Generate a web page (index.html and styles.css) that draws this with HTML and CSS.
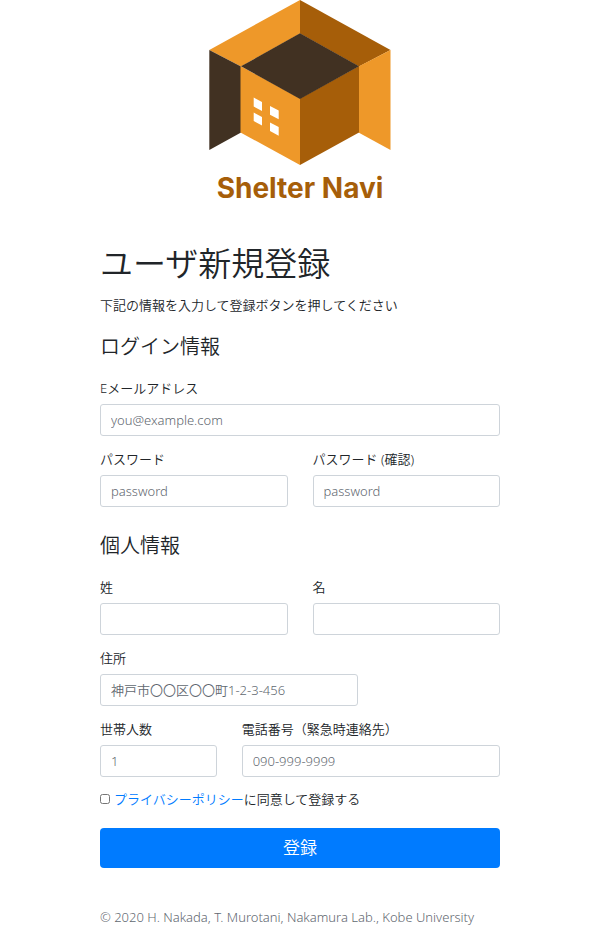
FILE: index.html
```html
<!DOCTYPE html>
<html lang="ja">
<head>
<meta charset="utf-8">
<meta name="viewport" content="width=device-width, initial-scale=1">
<title>Shelter Navi</title>
<link rel="stylesheet" href="styles.css">
</head>
<body>
<header class="brand">
  <svg class="logo" viewBox="0 0 200 210" role="img" aria-label="Shelter Navi">
    <path fill="#ee9829" d="M100 0 9.300 50 41 66.500 100 33.500z"/>
    <path fill="#a65e09" d="M100 0 190.500 50 159 66.500 100 33.500z"/>
    <path fill="#413122" d="M9.300 50 41 66.500V132.500L9.300 150z"/>
    <path fill="#ee9829" d="M190.500 50 158.500 66.500V132.500L190.500 150z"/>
    <path fill="#ee9829" d="M40.500 66 100 98.500V165L40.500 132.500z"/>
    <path fill="#a65e09" d="M159 66 100 98.500V165L159 132.500z"/>
    <path fill="#413122" d="M100 33.300 159 66.300 100 99 41 66.300z"/>
    <path fill="#fff" d="M53.700 97.500 62 102v9l-8.300-4.500zM70 106l8.700 4.500v8.700L70 114.700zM53.700 112.500 62 117v8.500l-8.300-4.500zM70 122.500l8.700 4.500v8.700L70 131z"/>
    <text class="logo-name" x="100" y="198" text-anchor="middle">Shelter Navi</text>
  </svg>
</header>
<main class="page">
  <h1>ユーザ新規登録</h1>
  <p class="lead">下記の情報を入力して登録ボタンを押してください</p>
  <form>
    <section>
      <h2>ログイン情報</h2>
      <div class="fields">
        <div class="field full">
          <label for="email">Eメールアドレス</label>
          <input id="email" type="email" placeholder="you@example.com">
        </div>
        <div class="field half">
          <label for="password">パスワード</label>
          <input id="password" type="password" placeholder="password">
        </div>
        <div class="field half">
          <label for="confirm">パスワード (確認)</label>
          <input id="confirm" type="password" placeholder="password">
        </div>
      </div>
    </section>
    <section>
      <h2>個人情報</h2>
      <div class="fields">
        <div class="field half">
          <label for="family">姓</label>
          <input id="family" type="text">
        </div>
        <div class="field half">
          <label for="given">名</label>
          <input id="given" type="text">
        </div>
        <div class="field wide">
          <label for="address">住所</label>
          <input id="address" type="text" placeholder="神戸市〇〇区〇〇町1-2-3-456">
        </div>
        <div class="field narrow">
          <label for="household">世帯人数</label>
          <input id="household" type="text" inputmode="numeric" placeholder="1">
        </div>
        <div class="field wide">
          <label for="phone">電話番号（緊急時連絡先）</label>
          <input id="phone" type="tel" placeholder="090-999-9999">
        </div>
      </div>
    </section>
    <div class="agree">
      <input id="agree" type="checkbox">
      <label for="agree"><a href="#privacy">プライバシーポリシー</a>に同意して登録する</label>
    </div>
    <button type="submit">登録</button>
  </form>
  <footer>© 2020 H. Nakada, T. Murotani, Nakamura Lab., Kobe University</footer>
</main>
</body>
</html>
```
FILE: styles.css
```css
* {
  box-sizing: border-box;
}

body {
  margin: 0;
  background: #fff;
  color: #212529;
  font: 350 13px/20px "Noto Sans", "Noto Sans CJK JP", sans-serif;
}

.brand {
  display: flex;
  justify-content: center;
  padding-right: 2px;
}

.logo {
  display: block;
  width: 200px;
}

.logo-name {
  font: 700 28px Inter, sans-serif;
  fill: #a65e09;
}

.page {
  padding: 32px 102px 0 100px;
}

h1,
h2 {
  margin: 0;
  font-family: "Noto Sans CJK JP", sans-serif;
  font-weight: 350;
}

h1 {
  font-size: 33px;
  line-height: 40px;
}

.lead {
  margin: 13px 0 19px;
}

h2 {
  margin-bottom: 20px;
  font-size: 20px;
  line-height: 24px;
}

section + section {
  margin-top: 26px;
}

.fields {
  display: grid;
  grid-template-columns: repeat(12, 1fr);
  gap: 13px 25px;
}

.field {
  display: flex;
  flex-direction: column;
  gap: 6px;
  min-width: 0;
}

.full {
  grid-column: span 12;
}

.half {
  grid-column: span 6;
}

.wide {
  grid-column: span 8;
}

.narrow {
  grid-column: 1 / span 4;
}

.field input {
  width: 100%;
  height: 32px;
  padding: 0 10px;
  border: 1px solid #ced4da;
  border-radius: 3px;
  background: #fff;
  color: #495057;
  font: inherit;
}

.field input::placeholder {
  color: #5f6870;
  opacity: 1;
}

.agree {
  display: flex;
  align-items: center;
  gap: 4px;
  margin: 12px 0 19px;
}

.agree input {
  width: 10px;
  height: 10px;
  margin: 0;
}

a {
  color: #007bff;
  text-decoration: none;
}

button {
  display: block;
  width: 100%;
  height: 40px;
  padding: 0;
  border: 0;
  border-radius: 4px;
  background: #007bff;
  color: #fff;
  font: inherit;
  font-size: 17px;
}

footer {
  margin-top: 39px;
  color: #5f6870;
}
```
